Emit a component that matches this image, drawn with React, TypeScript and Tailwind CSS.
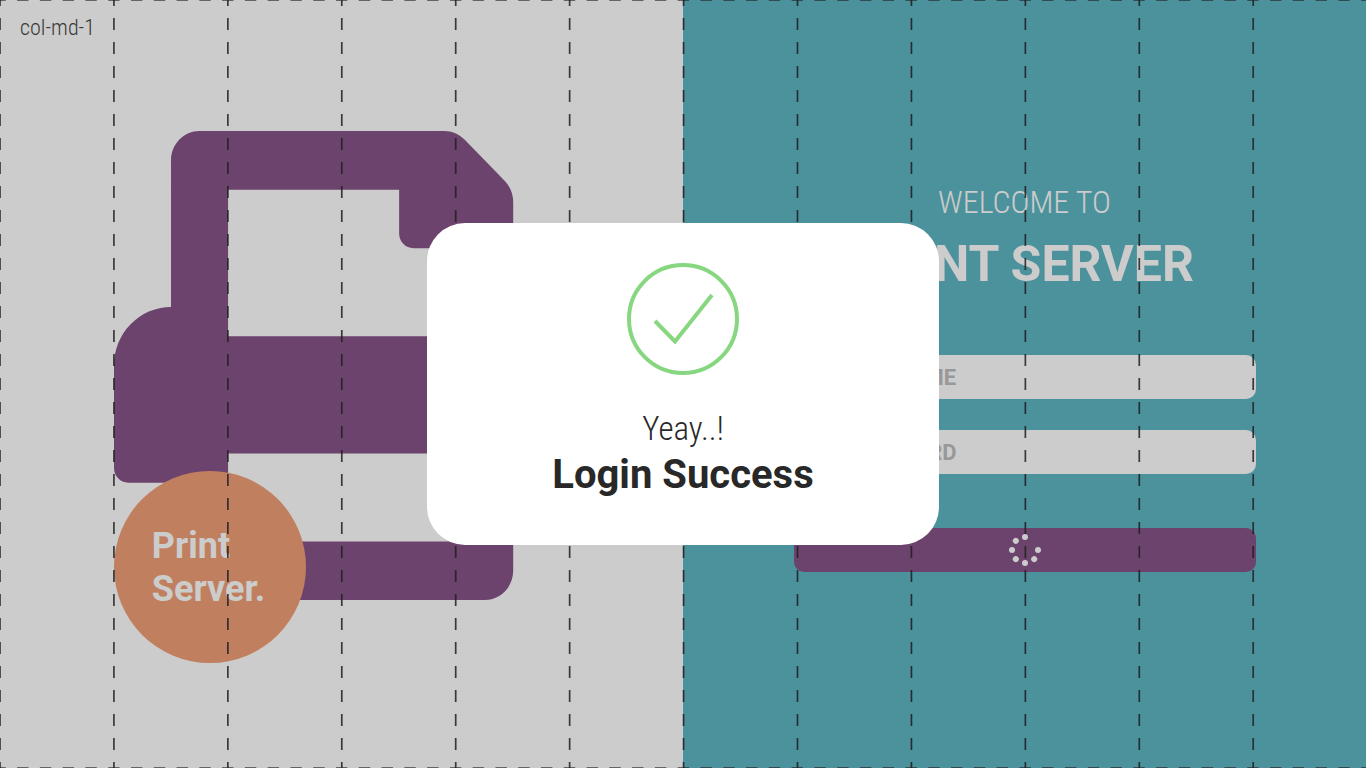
const COLUMNS = [0, 1, 2, 3, 4, 5, 6, 7, 8, 9, 10, 11];
const SPINNER_DOTS = [0, 90, 135, 180, 225, 270, 315];

function ColumnGuide() {
  return (
    <div className="pointer-events-none absolute inset-0">
      <svg className="absolute inset-0 h-full w-full" aria-hidden="true">
        <g stroke="#282828" strokeOpacity="0.85" strokeWidth="1.7">
          {COLUMNS.map((column) => (
            <line
              key={column}
              x1={`${(column * 100) / 11.99}%`}
              x2={`${(column * 100) / 11.99}%`}
              y1="0"
              y2="100%"
              strokeDasharray="12 12"
              strokeDashoffset="6"
            />
          ))}
        </g>
        <g stroke="#282828" strokeOpacity="0.6" strokeWidth="2">
          <line x1="0" x2="100%" y1="0" y2="0" strokeDasharray="11.4 11.38" strokeDashoffset="5.7" />
          <line x1="0" x2="100%" y1="100%" y2="100%" strokeDasharray="11.4 11.38" strokeDashoffset="5.7" />
        </g>
      </svg>
      <span className="relative block px-5 pt-4 font-['Roboto_Condensed','Liberation_Sans_Narrow',Roboto,sans-serif] text-[22px] leading-6 font-light text-[#484848]">
        col-md-1
      </span>
    </div>
  );
}

function PrinterArt() {
  return (
    <div className="w-2/3">
      <svg viewBox="0 0 511 512" preserveAspectRatio="none" className="h-[469px] w-full" fill="#875488" aria-hidden="true">
        <path d="M448 192V77.25c0-8.49-3.37-16.62-9.37-22.63L393.37 9.37c-6-6-14.14-9.37-22.63-9.37H96C78.33 0 64 14.33 64 32v160c-35.35 0-64 28.65-64 64v112c0 8.84 7.16 16 16 16h112v-32h256v96H128v-64H64v96c0 17.67 14.33 32 32 32h320c17.67 0 32-14.33 32-32v-96h48c8.84 0 16-7.16 16-16V256c0-35.35-28.65-64-64-64zm-64 32H128V64h192v48c0 8.84 7.16 16 16 16h48v96z" />
      </svg>
      <div className="relative -mt-[129px] flex size-48 items-center rounded-full bg-[#f1a079] pt-0.5 pl-[38px] text-4xl leading-[43px] font-bold text-white">
        <p>
          Print
          <br />
          Server.
        </p>
      </div>
    </div>
  );
}

function Spinner() {
  return (
    <svg viewBox="-16 -16 32 32" className="size-8" fill="#ffffff" aria-hidden="true">
      {SPINNER_DOTS.map((angle) => (
        <circle key={angle} cx="0" cy="-13" r="3" transform={`rotate(${angle})`} />
      ))}
    </svg>
  );
}

function LoginForm() {
  return (
    <form className="flex w-[462px] max-w-full flex-col pb-4">
      <p className="text-center font-['Roboto_Condensed','Liberation_Sans_Narrow',Roboto,sans-serif] text-[32px] leading-11 font-light text-white">
        WELCOME TO
      </p>
      <h1 className="mt-2.5 text-center text-[50px] leading-15 font-bold text-white">PRINT SERVER</h1>
      <input
        type="text"
        aria-label="Username"
        placeholder="USERNAME"
        className="mt-[61px] h-11 w-full rounded-[10px] bg-white px-[46px] text-[22px] font-bold placeholder:text-[#bfbfbf]"
      />
      <input
        type="password"
        aria-label="Password"
        placeholder="PASSWORD"
        className="mt-[31px] h-11 w-full rounded-[10px] bg-white px-[46px] text-[22px] font-bold placeholder:text-[#bfbfbf]"
      />
      <button
        type="submit"
        aria-label="Log in"
        className="mt-[54px] flex h-11 w-full items-center justify-center rounded-[10px] bg-[#875488]"
      >
        <Spinner />
      </button>
    </form>
  );
}

function SuccessDialog() {
  return (
    <div className="absolute inset-0 flex items-center justify-center bg-black/20">
      <div
        role="dialog"
        aria-modal="true"
        aria-labelledby="dialog-title"
        className="flex w-[512px] max-w-full flex-col items-center rounded-[38px] bg-white pt-10 pb-[46px] text-[#282828]"
      >
        <svg viewBox="0 0 112 112" className="size-28" fill="none" stroke="#87d780" strokeWidth="4" aria-hidden="true">
          <circle cx="56" cy="56" r="54" />
          <path d="M28 58L48 78.500L85 32" />
        </svg>
        <p className="mt-8 font-['Roboto_Condensed','Liberation_Sans_Narrow',Roboto,sans-serif] text-[33px] leading-11 font-light">
          Yeay..!
        </p>
        <h2 id="dialog-title" className="text-[40px] leading-12 font-bold">
          Login Success
        </h2>
      </div>
    </div>
  );
}

export default function App() {
  return (
    <div className="relative h-screen overflow-hidden font-[Roboto,sans-serif]">
      <main className="grid h-full grid-cols-2">
        <section className="flex flex-col items-center justify-center bg-white pt-[26px]">
          <PrinterArt />
        </section>
        <section className="flex flex-col items-center justify-center bg-[#5fb7c3]">
          <LoginForm />
        </section>
      </main>
      <ColumnGuide />
      <SuccessDialog />
    </div>
  );
}
